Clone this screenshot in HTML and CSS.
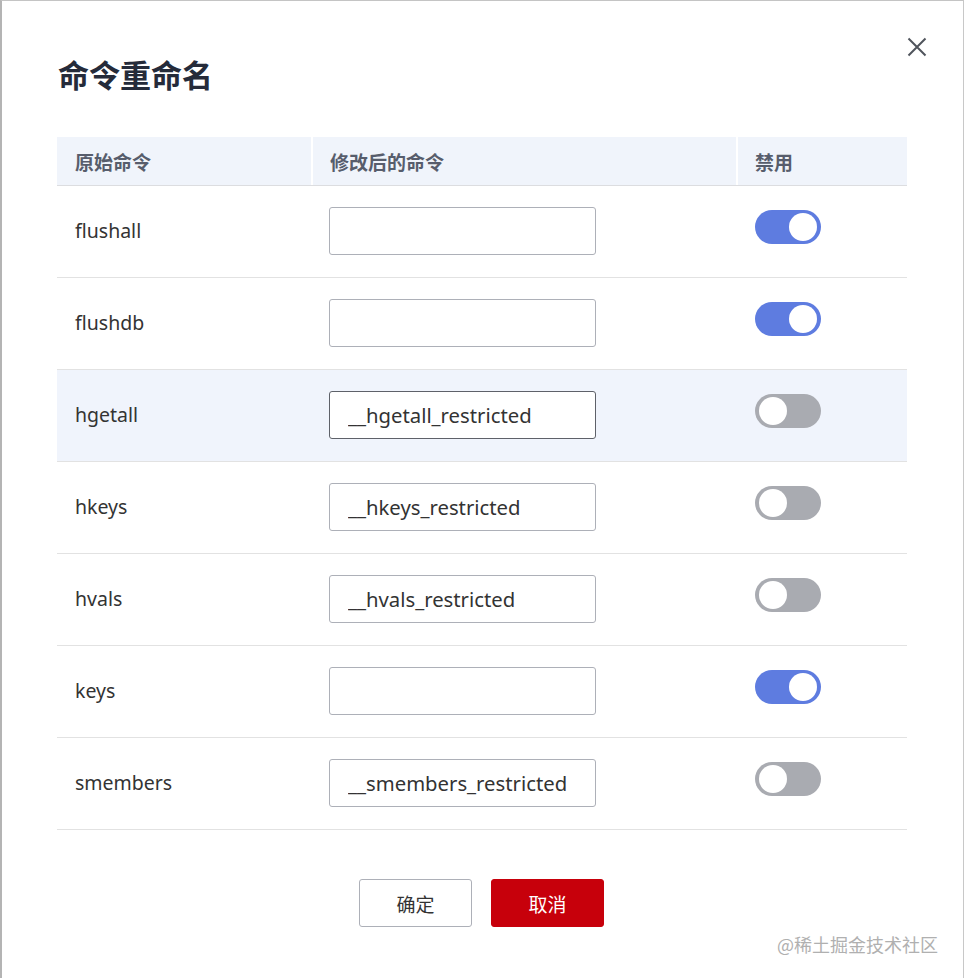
FILE: index.html
```html
<!DOCTYPE html>
<html lang="zh-CN">
<head>
<meta charset="utf-8">
<title>命令重命名</title>
<link rel="stylesheet" href="styles.css">
</head>
<body>
<div class="dialog">
  <button class="close" aria-label="关闭">
    <svg width="20" height="20" viewBox="0 0 20 20"><path d="M1.5 1.5 L18.5 18.5 M18.5 1.5 L1.5 18.5" stroke="#50545c" stroke-width="2" fill="none"/></svg>
  </button>
  <h1 class="title">命令重命名</h1>
  <div class="table">
    <div class="row head">
      <div class="cell">原始命令</div>
      <div class="cell">修改后的命令</div>
      <div class="cell">禁用</div>
    </div>
    <div class="row">
      <div class="cell name">flushall</div>
      <div class="cell"><input class="input" value=""></div>
      <div class="cell"><span class="switch on"><span class="knob"></span></span></div>
    </div>
    <div class="row">
      <div class="cell name">flushdb</div>
      <div class="cell"><input class="input" value=""></div>
      <div class="cell"><span class="switch on"><span class="knob"></span></span></div>
    </div>
    <div class="row hover">
      <div class="cell name">hgetall</div>
      <div class="cell"><input class="input" value="__hgetall_restricted"></div>
      <div class="cell"><span class="switch"><span class="knob"></span></span></div>
    </div>
    <div class="row">
      <div class="cell name">hkeys</div>
      <div class="cell"><input class="input" value="__hkeys_restricted"></div>
      <div class="cell"><span class="switch"><span class="knob"></span></span></div>
    </div>
    <div class="row">
      <div class="cell name">hvals</div>
      <div class="cell"><input class="input" value="__hvals_restricted"></div>
      <div class="cell"><span class="switch"><span class="knob"></span></span></div>
    </div>
    <div class="row">
      <div class="cell name">keys</div>
      <div class="cell"><input class="input" value=""></div>
      <div class="cell"><span class="switch on"><span class="knob"></span></span></div>
    </div>
    <div class="row">
      <div class="cell name">smembers</div>
      <div class="cell"><input class="input" value="__smembers_restricted"></div>
      <div class="cell"><span class="switch"><span class="knob"></span></span></div>
    </div>
  </div>
  <div class="actions">
    <button class="btn">确定</button>
    <button class="btn primary">取消</button>
  </div>
  <div class="watermark">@稀土掘金技术社区</div>
</div>
</body>
</html>
```

FILE: styles.css
```css
html, body {
  margin: 0;
  padding: 0;
  background: #fff;
}

body {
  font-family: "Noto Sans", "Noto Sans CJK SC", sans-serif;
  color: #333;
}

.dialog {
  position: relative;
  box-sizing: border-box;
  width: 964px;
  height: 978px;
  border-left: 2px solid #b4b4b4;
  border-top: 1px solid #c4c4c4;
  border-right: 1px solid #c8c8c8;
  padding: 0 55px 0 55px;
}

.close {
  position: absolute;
  top: 36px;
  right: 36px;
  width: 20px;
  height: 20px;
  padding: 0;
  border: 0;
  background: none;
}

.close svg {
  display: block;
}

.title {
  margin: 0;
  padding-top: 51px;
  padding-left: 1px;
  height: 85px;
  box-sizing: border-box;
  font-family: "Noto Sans CJK SC", sans-serif;
  font-size: 31px;
  font-weight: 700;
  line-height: 44px;
  color: #252b3a;
}

.table {
  margin-top: 51px;
  width: 850px;
}

.row {
  display: grid;
  grid-template-columns: 254px 423px 169px;
  column-gap: 2px;
  height: 92px;
  box-sizing: border-box;
  padding-bottom: 2px;
  border-bottom: 1px solid #e2e2e2;
  align-items: center;
}

.row.head {
  height: 49px;
  padding-bottom: 0;
  border-bottom: 1px solid #dcdde0;
  align-items: stretch;
}

.row.head .cell {
  background: #f0f4fb;
  font-family: "Noto Sans CJK SC", sans-serif;
  font-size: 19px;
  font-weight: 700;
  color: #575d6c;
  display: flex;
  align-items: center;
  padding-left: 18px;
}

.row.head .cell:nth-child(2) {
  padding-left: 17px;
}

.row.hover {
  background: #f0f4fc;
}

.cell {
  box-sizing: border-box;
}

.cell.name {
  padding-left: 18px;
  font-size: 19.5px;
  color: #333;
}

.row .cell:nth-child(2) {
  padding-left: 16px;
}

.row .cell:nth-child(3) {
  padding-left: 17px;
  display: flex;
  align-items: center;
}

.input {
  display: block;
  box-sizing: border-box;
  width: 267px;
  height: 48px;
  border: 1px solid #adb0b8;
  border-radius: 3px;
  padding: 1px 0 0 18px;
  font-family: "Noto Sans", "Noto Sans CJK SC", sans-serif;
  font-size: 20.3px;
  color: #333;
  background: #fff;
  outline: none;
}

.row.hover .input {
  border-color: #5e6169;
}

.switch {
  position: relative;
  display: block;
  width: 66px;
  height: 34px;
  border-radius: 17px;
  background: #a9abb1;
  margin-bottom: 8px;
}

.switch.on {
  background: #5e7ce0;
}

.knob {
  position: absolute;
  top: 3px;
  left: 4px;
  width: 28px;
  height: 28px;
  border-radius: 50%;
  background: #fff;
}

.switch.on .knob {
  left: 34px;
}

.actions {
  display: flex;
  justify-content: center;
  gap: 19px;
  margin-top: 49px;
  padding-right: 2px;
}

.btn {
  box-sizing: border-box;
  width: 113px;
  height: 48px;
  border: 1px solid #adb0b8;
  border-radius: 3px;
  background: #fff;
  font-family: "Noto Sans CJK SC", sans-serif;
  font-size: 19px;
  color: #333;
  padding: 0;
}

.btn.primary {
  background: #c7000b;
  border-color: #c7000b;
  color: #fff;
}

.watermark {
  position: absolute;
  right: 25px;
  bottom: 22px;
  font-family: "Noto Sans CJK SC", sans-serif;
  font-size: 18px;
  line-height: 24px;
  color: #b0b0b0;
}
```
